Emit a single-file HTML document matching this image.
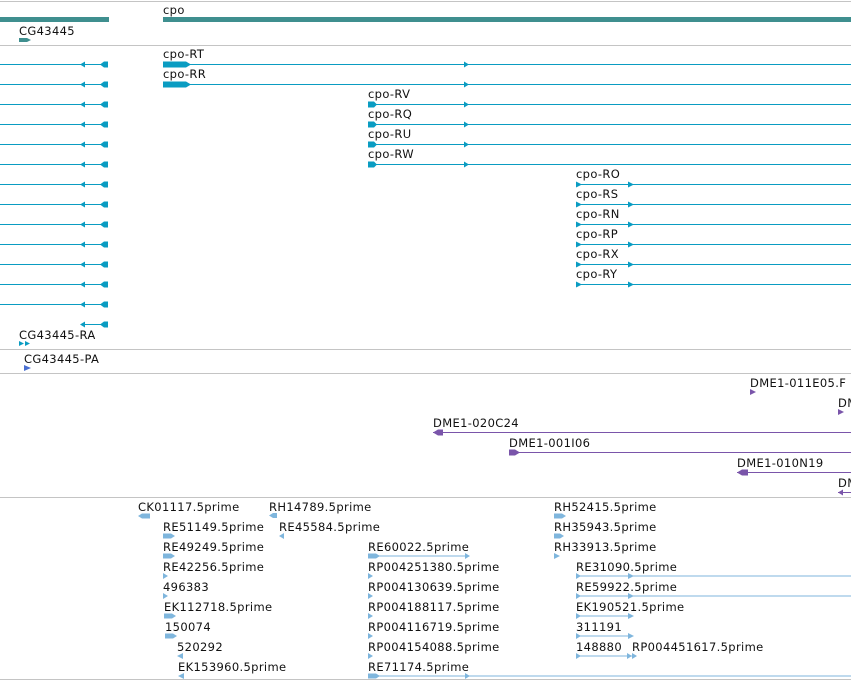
<!DOCTYPE html>
<html><head><meta charset="utf-8"><style>
html,body{margin:0;padding:0;background:#fff;width:851px;height:681px;overflow:hidden}
svg text{font-family:"DejaVu Sans","Liberation Sans",sans-serif;font-size:11.5px;letter-spacing:0.35px;fill:#111;transform:translateY(1px)}
</style></head><body>
<svg width="851" height="681" xmlns="http://www.w3.org/2000/svg">
<g stroke="#c4c4c4" stroke-width="1">
<line x1="0" y1="1.5" x2="851" y2="1.5"/><line x1="0" y1="45.5" x2="851" y2="45.5"/>
<line x1="0" y1="349.5" x2="851" y2="349.5"/><line x1="0" y1="373.5" x2="851" y2="373.5"/>
<line x1="0" y1="497.5" x2="851" y2="497.5"/><line x1="0" y1="679.5" x2="851" y2="679.5"/>
</g>
<rect x="0" y="17" width="109" height="5" fill="#3f8f8f"/>
<rect x="163" y="17" width="688" height="5" fill="#3f8f8f"/>
<text x="163" y="13">cpo</text>
<text x="19" y="34">CG43445</text>
<polygon points="19,38 27,38 31,40 27,42 19,42" fill="#3f8f8f"/>
<g stroke="#0a9cc2" stroke-width="1" fill="#0a9cc2">
<line x1="0" y1="64.5" x2="108" y2="64.5"/><line x1="0" y1="84.5" x2="108" y2="84.5"/>
<line x1="0" y1="104.5" x2="108" y2="104.5"/><line x1="0" y1="124.5" x2="108" y2="124.5"/>
<line x1="0" y1="144.5" x2="108" y2="144.5"/><line x1="0" y1="164.5" x2="108" y2="164.5"/>
<line x1="0" y1="184.5" x2="108" y2="184.5"/><line x1="0" y1="204.5" x2="108" y2="204.5"/>
<line x1="0" y1="224.5" x2="108" y2="224.5"/><line x1="0" y1="244.5" x2="108" y2="244.5"/>
<line x1="0" y1="264.5" x2="108" y2="264.5"/><line x1="0" y1="284.5" x2="108" y2="284.5"/>
<line x1="0" y1="304.5" x2="108" y2="304.5"/><line x1="82" y1="324.5" x2="108" y2="324.5"/>
</g>
<g fill="#0a9cc2">
<path id="la" d="M80,64.5 L85,61.5 L85,67.5Z M100,64.5 L104,61.5 L108,61.5 L108,67.5 L104,67.5Z"/>
<use href="#la" y="20"/><use href="#la" y="40"/><use href="#la" y="60"/><use href="#la" y="80"/>
<use href="#la" y="100"/><use href="#la" y="120"/><use href="#la" y="140"/><use href="#la" y="160"/>
<use href="#la" y="180"/><use href="#la" y="200"/><use href="#la" y="220"/><use href="#la" y="240"/><use href="#la" y="260"/>
</g>
<g stroke="#0a9cc2" stroke-width="1">
<line x1="163" y1="64.5" x2="851" y2="64.5"/><line x1="163" y1="84.5" x2="851" y2="84.5"/>
<line x1="368" y1="104.5" x2="851" y2="104.5"/><line x1="368" y1="124.5" x2="851" y2="124.5"/>
<line x1="368" y1="144.5" x2="851" y2="144.5"/><line x1="368" y1="164.5" x2="851" y2="164.5"/>
<line x1="576" y1="184.5" x2="851" y2="184.5"/><line x1="576" y1="204.5" x2="851" y2="204.5"/>
<line x1="576" y1="224.5" x2="851" y2="224.5"/><line x1="576" y1="244.5" x2="851" y2="244.5"/>
<line x1="576" y1="264.5" x2="851" y2="264.5"/><line x1="576" y1="284.5" x2="851" y2="284.5"/>
</g>
<g fill="#0a9cc2">
<path d="M163,61.5 L186,61.5 L191,64.5 L186,67.5 L163,67.5Z M464,61.5 L469,64.5 L464,67.5Z"/>
<path d="M163,81.5 L186,81.5 L191,84.5 L186,87.5 L163,87.5Z M464,81.5 L469,84.5 L464,87.5Z"/>
<path id="rv" d="M368,101.5 L374,101.5 L377,104.5 L374,107.5 L368,107.5Z M464,101.5 L469,104.5 L464,107.5Z"/>
<use href="#rv" y="20"/><use href="#rv" y="40"/><use href="#rv" y="60"/>
<path id="ro" d="M576,181.5 L582,184.5 L576,187.5Z M628,181.5 L634,184.5 L628,187.5Z"/>
<use href="#ro" y="20"/><use href="#ro" y="40"/><use href="#ro" y="60"/><use href="#ro" y="80"/><use href="#ro" y="100"/>
</g>
<text x="163" y="57">cpo-RT</text><text x="163" y="77">cpo-RR</text>
<text x="368" y="97">cpo-RV</text><text x="368" y="117">cpo-RQ</text>
<text x="368" y="137">cpo-RU</text><text x="368" y="157">cpo-RW</text>
<text x="576" y="177">cpo-RO</text><text x="576" y="197">cpo-RS</text>
<text x="576" y="217">cpo-RN</text><text x="576" y="237">cpo-RP</text>
<text x="576" y="257">cpo-RX</text><text x="576" y="277">cpo-RY</text>
<text x="19" y="338">CG43445-RA</text>
<path d="M19,341 L24,343.5 L19,346Z M25,341 L30,343.5 L25,346Z" fill="#0a9cc2"/>
<text x="24" y="362">CG43445-PA</text>
<path d="M24,365 L31,368 L24,371Z" fill="#4a6fd0"/>
<g fill="#7a55aa">
<text x="750" y="386">DME1-011E05.F</text>
<path d="M750,389 L756,392 L750,395Z"/>
<text x="838" y="406">DM</text>
<path d="M838,409 L844,412 L838,415Z"/>
<text x="433" y="426">DME1-020C24</text>
<rect x="433" y="432" width="418" height="1"/>
<path d="M433,432.5 L438,429.5 L443,429.5 L443,435.5 L438,435.5Z"/>
<text x="509" y="446">DME1-001I06</text>
<rect x="509" y="452" width="342" height="1"/>
<path d="M509,449.5 L515,449.5 L520,452.5 L515,455.5 L509,455.5Z"/>
<text x="737" y="466">DME1-010N19</text>
<rect x="737" y="472" width="114" height="1"/>
<path d="M737,472.5 L742,469.5 L748,469.5 L748,475.5 L742,475.5Z"/>
<text x="838" y="486">DM</text>
<rect x="838" y="492" width="13" height="1"/>
<path d="M838,492.5 L843,489.5 L843,495.5Z"/>
</g>
<g fill="#111">
<text x="138" y="510">CK01117.5prime</text><text x="269" y="510">RH14789.5prime</text><text x="554" y="510">RH52415.5prime</text>
<text x="163" y="530">RE51149.5prime</text><text x="279" y="530">RE45584.5prime</text><text x="554" y="530">RH35943.5prime</text>
<text x="163" y="550">RE49249.5prime</text><text x="368" y="550">RE60022.5prime</text><text x="554" y="550">RH33913.5prime</text>
<text x="163" y="570">RE42256.5prime</text><text x="368" y="570">RP004251380.5prime</text><text x="576" y="570">RE31090.5prime</text>
<text x="163" y="590">496383</text><text x="368" y="590">RP004130639.5prime</text><text x="576" y="590">RE59922.5prime</text>
<text x="164" y="610">EK112718.5prime</text><text x="368" y="610">RP004188117.5prime</text><text x="576" y="610">EK190521.5prime</text>
<text x="165" y="630">150074</text><text x="368" y="630">RP004116719.5prime</text><text x="576" y="630">311191</text>
<text x="177" y="650">520292</text><text x="368" y="650">RP004154088.5prime</text><text x="576" y="650">148880</text><text x="632" y="650">RP004451617.5prime</text>
<text x="178" y="670">EK153960.5prime</text><text x="368" y="670">RE71174.5prime</text>
</g>
<g fill="#7fb6dd" stroke="none">
<path d="M138,516 L142,513.5 L150,513.5 L150,518.5 L142,518.5Z"/>
<path d="M269,515.5 L273,513 L277,513 L277,518 L273,518Z"/>
<path d="M554,513.5 L562,513.5 L566,516 L562,518.5 L554,518.5Z"/>
<path d="M163,533.5 L171,533.5 L175,536 L171,538.5 L163,538.5Z"/>
<path d="M279,536 L284,533 L284,539Z"/>
<path d="M554,533.5 L560,533.5 L564,536 L560,538.5 L554,538.5Z"/>
<path d="M163,553.5 L171,553.5 L175,556 L171,558.5 L163,558.5Z"/>
<path d="M368,553.5 L376,553.5 L380,556 L376,558.5 L368,558.5Z M465,553 L470,556 L465,559Z"/>
<rect x="368" y="555.5" width="100" height="1"/>
<path d="M554,553 L560,556 L554,559Z"/>
<path d="M163,573 L168,576 L163,579Z"/>
<path d="M368,573 L373,576 L368,579Z"/>
<rect x="576" y="575.5" width="275" height="1"/>
<path d="M576,573 L581,576 L576,579Z M628,573 L634,576 L628,579Z"/>
<path d="M163,593 L168,596 L163,599Z"/>
<path d="M368,593 L373,596 L368,599Z"/>
<rect x="576" y="595.5" width="275" height="1"/>
<path d="M576,593 L581,596 L576,599Z M628,593 L634,596 L628,599Z"/>
<path d="M164,613.5 L172,613.5 L176,616 L172,618.5 L164,618.5Z"/>
<path d="M368,613 L373,616 L368,619Z"/>
<rect x="576" y="615.5" width="56" height="1"/>
<path d="M576,613 L581,616 L576,619Z M628,613 L634,616 L628,619Z"/>
<path d="M165,633.5 L173,633.5 L177,636 L173,638.5 L165,638.5Z"/>
<path d="M368,633 L373,636 L368,639Z"/>
<rect x="576" y="635.5" width="56" height="1"/>
<path d="M576,633 L581,636 L576,639Z M628,633 L634,636 L628,639Z"/>
<path d="M177,656 L183,653 L183,659Z"/>
<path d="M368,653 L373,656 L368,659Z"/>
<rect x="576" y="655.5" width="56" height="1"/>
<path d="M576,653 L581,656 L576,659Z M627,653 L632,656 L627,659Z M632,653 L637,656 L632,659Z"/>
<path d="M178,676 L184,673 L184,679Z"/>
<rect x="368" y="675.5" width="483" height="1"/>
<path d="M368,673.5 L376,673.5 L380,676 L376,678.5 L368,678.5Z M465,673 L470,676 L465,679Z"/>
</g>
</svg>
</body></html>
